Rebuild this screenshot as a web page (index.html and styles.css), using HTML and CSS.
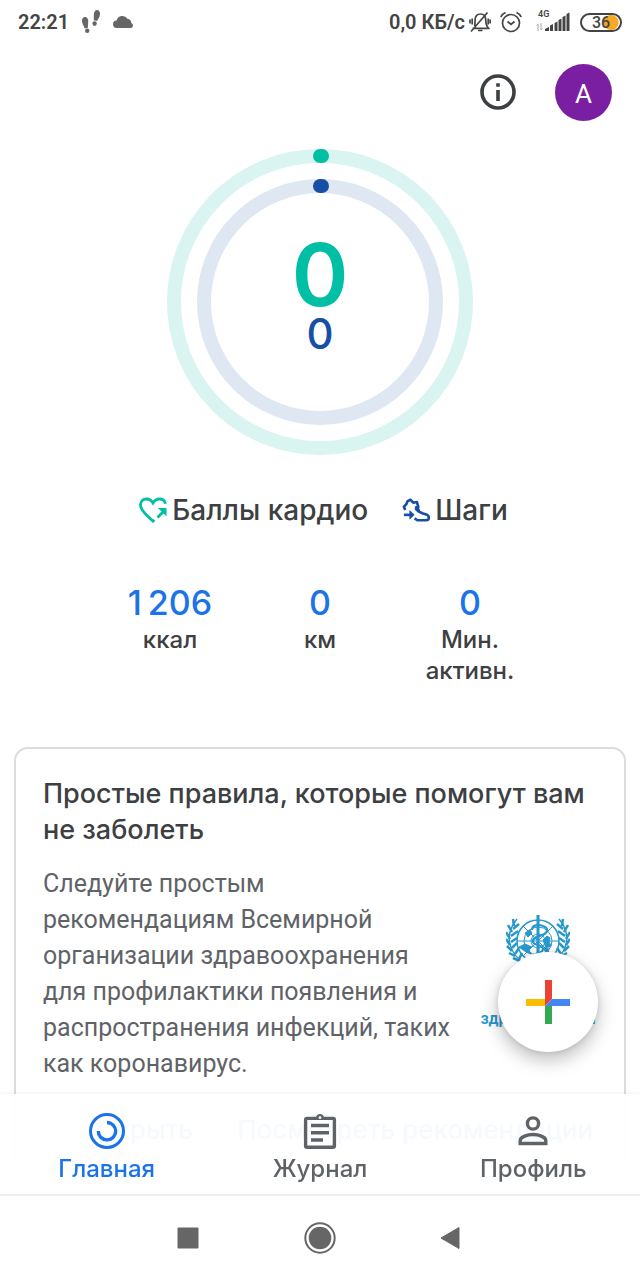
FILE: index.html
```html
<!DOCTYPE html>
<html lang="ru">
<head>
    <meta charset="UTF-8">
    <meta name="viewport" content="width=device-width, initial-scale=1.0">
    <title>Главная</title>
    <link rel="stylesheet" href="styles.css">
</head>
<body>

    <div class="status-bar">
        <div class="status-left">
            <span>22:21</span>
            <svg width="20" height="26" viewBox="0 0 20 26" fill="#666">
                <path d="M4 8c2.500 0 3.500 2.500 3.200 5.500-.2 2-.4 4-.2 5.200l-3.400.8C3.200 17 .8 14.500 1 11.500 1.100 9.500 2.200 8 4 8z"/>
                <ellipse cx="6.200" cy="21.800" rx="2.200" ry="2.300"/>
                <path d="M16 1c2 0 3.200 2 3 4.500-.2 3-2.200 4.500-2.800 6.500l-3.500-.8c.4-1.200 0-3.200.1-5.200C13 3 14 1 16 1z"/>
                <ellipse cx="13.600" cy="14.600" rx="2.200" ry="2.300"/>
            </svg>
            <svg width="22" height="14" viewBox="0 0 22 14" fill="#666">
                <path d="M4 13a3.700 3.700 0 0 1-.4-7.400A6 6 0 0 1 14.500 3.800a4.500 4.500 0 0 1 3.800 4.200 2.700 2.700 0 0 1 0 5z"/>
            </svg>
        </div>
        <div class="status-right">
            <span>0,0 КБ/с</span>
            <svg width="22" height="22" viewBox="0 0 22 22" fill="none" stroke="#444" stroke-width="1.700">
                <path d="M5.500 15c.8-2 .4-4 .6-6.500C6.400 5 8.500 3 11.500 3s5 2 5.200 5.500c.1 2.500 0 4.500 1.300 6.500l1.500 2.300H3.500M9 19.500h4.500M2 20.500L18.500 1.500"/>
                <path d="M3.200 7.500v6M1 8.500v4M19.200 7.500v6M21.200 8.500v4"/>
            </svg>
            <svg class="alarm" width="22" height="22" viewBox="0 0 22 22" fill="none" stroke="#444" stroke-width="1.700">
                <circle cx="11" cy="12" r="8.500"/>
                <path d="M7.500 10.500L11 13.500l3.500-3M.8 6Q2 3 5.500 1.500M21.200 6Q20 3 16.500 1.500"/>
            </svg>
            <div class="signal">
                <small>4G</small>
                <svg width="34" height="20" viewBox="0 0 34 20" fill="#444">
                    <path d="M9 17l4-2v4H9zM14 13.500l3-1.500v7h-3zM18.500 11l3-1.500V19h-3zM22.500 8l3-1.500V19h-3zM26.500 5l3-1.500V19h-3zM30.500 2l3-1.500V19h-3z"/>
                    <path d="M2 19v-7M5 11v7M.5 13.500L2 12M6.500 16.500L5 18" stroke="#aaa" fill="none"/>
                </svg>
            </div>
            <div class="battery"><span>36</span></div>
        </div>
    </div>

    <header class="app-bar">
        <button class="icon-button" aria-label="Информация">
            <svg width="36" height="36" viewBox="0 0 36 36">
                <circle cx="18" cy="18" r="16" fill="none" stroke="#3c4043" stroke-width="3.600"/>
                <path d="M16.200 9.200h3.600v3.600h-3.600zM16.200 16h3.600v11h-3.600z" fill="#3c4043"/>
            </svg>
        </button>
        <button class="avatar" aria-label="Аккаунт">А</button>
    </header>

    <main>
        <div class="goal">
            <svg class="rings" viewBox="0 0 306 306" fill="none" stroke-width="14">
                <circle cx="153" cy="153" r="146" stroke="#daf5f1"/>
                <circle cx="153" cy="153" r="116" stroke="#dfe7f3"/>
                <path d="M153 7h2" stroke="#00bfa5" stroke-linecap="round"/>
                <path d="M153 37h2" stroke="#174ea6" stroke-linecap="round"/>
            </svg>
            <div class="points">0</div>
            <div class="steps">0</div>
        </div>

        <div class="legend">
            <div class="legend-item">
                <svg width="28" height="26" viewBox="0 0 28 26" fill="none" stroke="#00bfa5" stroke-width="2.800">
                    <path d="M15.500 23L14 24.200 6.500 17C3.500 14 1.500 11.500 1.500 8c0-3.500 2.500-6 5.800-6C10 2 12.500 3.500 14 6c1.500-2.500 4-4 6.500-4 3 0 5.300 1.700 6 4.800"/>
                    <path d="M18.500 20.500l6-6"/>
                    <path d="M19 11h8.500v8.500z" fill="#00bfa5" stroke="none"/>
                </svg>
                <span>Баллы кардио</span>
            </div>
            <div class="legend-item">
                <svg width="28" height="26" viewBox="0 0 30 26" fill="none" stroke="#174ea6" stroke-width="2.800" stroke-linejoin="round">
                    <path d="M3.500 13L2 9.500 4.500 7 6 3.500 9 2l3 3.200 4-.7 1.500 5.500-2.500 1.800 2.500 2.700 5 2.200 4.500 1.500c1.500.8 2 2.300 1.500 4.500-.5 1-1.500 1.300-3 1.300h-9l-3-2M14 10.500l3.500-1M16 14l3-1.500"/>
                    <path d="M2 18.200h8"/>
                    <path d="M8 13l5.500 5.200L8 23.500z" fill="#174ea6" stroke="none"/>
                </svg>
                <span>Шаги</span>
            </div>
        </div>

        <div class="stats">
            <div class="stat"><strong>1&#8201;206</strong><span>ккал</span></div>
            <div class="stat"><strong>0</strong><span>км</span></div>
            <div class="stat"><strong>0</strong><span>Мин. активн.</span></div>
        </div>

        <section class="card">
            <h2>Простые правила, которые помогут вам не заболеть</h2>
            <div class="card-body">
                <p>Следуйте простым рекомендациям Всемирной организации здравоохранения для профилактики появления и распространения инфекций, таких как коронавирус.</p>
                <div class="who">
                    <svg width="64" height="56" viewBox="0 0 64 56" fill="none" stroke="#2798cb">
                        <circle cx="32" cy="27" r="21" stroke-width="1.500"/>
                        <circle cx="32" cy="27" r="14"/>
                        <circle cx="32" cy="27" r="7"/>
                        <path d="M11 27h42M17 12l30 30M47 12L17 42"/>
                        <path d="M32 1v48" stroke-width="3"/>
                        <path d="M26 16c0-5 6-6 11-4 6 2 5 7-1 9-5 2-10 3-9 7s10 2 10 7-8 3-8 7 5 2 5 5" stroke-width="2.200"/>
                        <path d="M13 33l6-3 7 3-3 3 2 4-5-2zM37 26l4-4 3 2-1 4 2 4-5 2zM19 19l5-3 2 3-4 4zM38 34l5 1-3 5z" fill="#2798cb"/>
                        <path d="M11 5C-1 19 0 39 21 51M53 5c12 14 11 34-10 46" stroke-width="1.500"/>
                        <path d="M8 12L7 5M6 18L2 11M4 25L0 18M4 31l-4-6M6 37l-5-5M9 42l-6-3M14 47l-7-3M7 15l6-5M5 22l7-5M5 28l6-4M6 34l5-5M9 40l4-6M13 45l3-6M56 12l1-7M58 18l4-7M60 25l4-7M60 31l4-6M58 37l5-5M55 42l6-3M50 47l7-3M57 15l-6-5M59 22l-7-5M59 28l-6-4M58 34l-5-5M55 40l-4-6M51 45l-3-6" stroke-width="2.500"/>
                    </svg>
                    <div class="who-name">
                        <small>Всемирная</small>
                        <small>организация</small>
                        <span>здравоохранен</span>
                    </div>
                </div>
            </div>
            <div class="card-actions">
                <button>Скрыть</button>
                <button>Посмотреть рекомендации</button>
            </div>
        </section>
    </main>

    <button class="fab" aria-label="Добавить">
        <svg width="44" height="44" viewBox="0 0 44 44">
            <path d="M19 0h7v19l-7 7z" fill="#ea4335"/>
            <path d="M0 19h19v7H0z" fill="#fbbc04"/>
            <path d="M26 19h18v7H19z" fill="#4285f4"/>
            <path d="M19 26h7v18h-7z" fill="#34a853"/>
        </svg>
    </button>

    <footer class="bottom">
        <nav class="tabs">
            <a class="tab active" href="#">
                <svg width="36" height="36" viewBox="0 0 36 36" fill="none" stroke="#1a73e8" stroke-width="3">
                    <circle cx="18" cy="18" r="16.500"/>
                    <path d="M18 9.500a8.700 8.700 0 1 1-8.700 8.500" stroke-width="3.400"/>
                </svg>
                <span>Главная</span>
            </a>
            <a class="tab" href="#">
                <svg width="36" height="36" viewBox="0 0 36 36" fill="none" stroke="#5f6368" stroke-width="3.400">
                    <rect x="3.600" y="5.400" width="28.800" height="28.800" rx="1.500"/>
                    <path d="M9 12.500h18M9 19.800h18M9 27h12"/>
                    <path d="M10 4h4a4.200 4.200 0 0 1 8 0h4v3H10z" fill="#5f6368" stroke="none"/>
                    <circle cx="18" cy="4.600" r="1.300" fill="#fff" stroke="none"/>
                </svg>
                <span>Журнал</span>
            </a>
            <a class="tab" href="#">
                <svg width="36" height="36" viewBox="0 0 36 36" fill="none" stroke="#5f6368" stroke-width="3.400">
                    <circle cx="18" cy="10.500" r="5.600"/>
                    <path d="M5.200 30.500v-3c0-3.800 7.600-6 12.800-6s12.800 2.200 12.800 6v3z"/>
                </svg>
                <span>Профиль</span>
            </a>
        </nav>
        <div class="system-nav">
            <button aria-label="Недавние">
                <svg width="36" height="36" viewBox="0 0 36 36"><rect x="7.500" y="7.500" width="21" height="21" rx="1" fill="#666"/></svg>
            </button>
            <button aria-label="Домой">
                <svg width="36" height="36" viewBox="0 0 36 36"><circle cx="18" cy="18" r="14.700" fill="none" stroke="#666" stroke-width="2"/><circle cx="18" cy="18" r="11.300" fill="#666"/></svg>
            </button>
            <button aria-label="Назад">
                <svg width="36" height="36" viewBox="0 0 36 36"><path d="M7 18L25 7.500v21z" fill="#666" stroke="#666" stroke-linejoin="round"/></svg>
            </button>
        </div>
    </footer>

</body>
</html>
```
FILE: styles.css
```css
* {
    box-sizing: border-box;
}

body {
    margin: 0;
    height: 100vh;
    overflow: hidden;
    background: #fff;
    color: #3c4043;
    font-family: Inter, Roboto, sans-serif;
}

button {
    padding: 0;
    border: none;
    background: none;
    font-family: inherit;
    cursor: pointer;
}

svg {
    display: block;
    flex-shrink: 0;
}

/* Status bar */
.status-bar {
    display: flex;
    justify-content: space-between;
    height: 44px;
    padding: 0 18px;
    font-family: Roboto, sans-serif;
    font-size: 20px;
    font-weight: 600;
    color: #444;
}

.status-left,
.status-right {
    display: flex;
    align-items: center;
}

.status-left {
    gap: 12px;
}

.status-right {
    gap: 4px;
}

.alarm {
    margin: 0 10px 0 5px;
}

.signal {
    position: relative;
}

.signal small {
    position: absolute;
    top: -3px;
    left: 2px;
    font-size: 9px;
    line-height: 10px;
}

.battery {
    width: 42px;
    height: 19px;
    margin-left: 6px;
    border: 2px solid #444;
    border-radius: 10px;
    background: radial-gradient(circle at 29px 50%, #f9a825 7px, transparent 8px);
    font-size: 16px;
    font-weight: 500;
    line-height: 15px;
    text-align: center;
}

/* App bar */
.app-bar {
    display: flex;
    align-items: center;
    justify-content: flex-end;
    gap: 39px;
    height: 96px;
    padding: 0 28px;
}

.avatar {
    width: 57px;
    height: 57px;
    border-radius: 50%;
    background: #7b1fa2;
    color: #fff;
    font-family: Roboto, sans-serif;
    font-size: 26px;
    line-height: 60px;
}

/* Goal rings */
.goal {
    position: relative;
    display: flex;
    flex-direction: column;
    align-items: center;
    width: 306px;
    height: 306px;
    margin: 9px auto 0;
    padding-top: 90px;
}

.rings {
    position: absolute;
    inset: 0;
}

.points {
    font-size: 86px;
    font-weight: 600;
    line-height: 72px;
    color: #00bfa5;
}

.steps {
    font-size: 42px;
    font-weight: 500;
    line-height: 46px;
    color: #174ea6;
}

.legend {
    display: flex;
    justify-content: center;
    gap: 34px;
    margin-top: 38px;
    padding-left: 7px;
    font-size: 28px;
    font-weight: 500;
    line-height: 34px;
}

.legend-item {
    display: flex;
    align-items: center;
    gap: 5px;
}

.stats {
    display: flex;
    justify-content: center;
    margin-top: 54px;
}

.stat {
    display: flex;
    flex-direction: column;
    width: 150px;
    padding: 0 24px;
    text-align: center;
    align-items: center;
    font-size: 24px;
    font-weight: 500;
    line-height: 31px;
}

.stat strong {
    font-size: 34px;
    font-weight: 500;
    line-height: 43px;
    white-space: nowrap;
    color: #1a73e8;
}

/* Card */
.card {
    margin: 61px 14px 0;
    padding: 27px;
    border: 2px solid #dadce0;
    border-radius: 14px;
}

.card h2 {
    margin: 0 0 18px;
    font-size: 27px;
    font-weight: 500;
    line-height: 36px;
}

.card-body {
    display: flex;
    justify-content: space-between;
}

.card p {
    flex: 1;
    max-width: 410px;
    margin: 0;
    font-family: Roboto, sans-serif;
    font-size: 25px;
    line-height: 36px;
    color: #5f6368;
}

.who {
    display: flex;
    flex-direction: column;
    align-items: center;
    gap: 4px;
    width: 118px;
    padding-top: 48px;
}

.who-name {
    display: flex;
    flex-direction: column;
    align-items: center;
    font-family: Roboto, sans-serif;
    font-size: 16px;
    font-weight: 600;
    line-height: 18px;
    color: #2798cb;
}

.who-name small {
    font-size: 13px;
}

.card-actions {
    display: flex;
    justify-content: flex-end;
    gap: 44px;
    margin-top: 30px;
    padding-right: 4px;
}

.card-actions button {
    font-size: 26px;
    font-weight: 500;
    line-height: 36px;
    color: #1a73e8;
}

.fab {
    position: fixed;
    right: 42px;
    bottom: 228px;
    display: flex;
    align-items: center;
    justify-content: center;
    width: 100px;
    height: 100px;
    border-radius: 50%;
    background: #fff;
    box-shadow: 0 8px 18px rgba(0, 0, 0, 0.25), 0 0 6px rgba(0, 0, 0, 0.12);
}

.bottom {
    position: fixed;
    left: 0;
    right: 0;
    bottom: 0;
}

.tabs {
    display: flex;
    height: 102px;
    padding-top: 19px;
    border-bottom: 2px solid #eee;
    background: rgba(255, 255, 255, 0.96);
    box-shadow: 0 -1px 4px rgba(0, 0, 0, 0.06);
}

.tab {
    flex: 1;
    display: flex;
    flex-direction: column;
    align-items: center;
    gap: 5px;
    font-size: 24px;
    font-weight: 500;
    line-height: 30px;
    color: #5f6368;
    text-decoration: none;
}

.tab.active {
    color: #1a73e8;
}

.system-nav {
    display: flex;
    align-items: center;
    justify-content: center;
    gap: 96px;
    height: 84px;
    background: #fff;
}
```
